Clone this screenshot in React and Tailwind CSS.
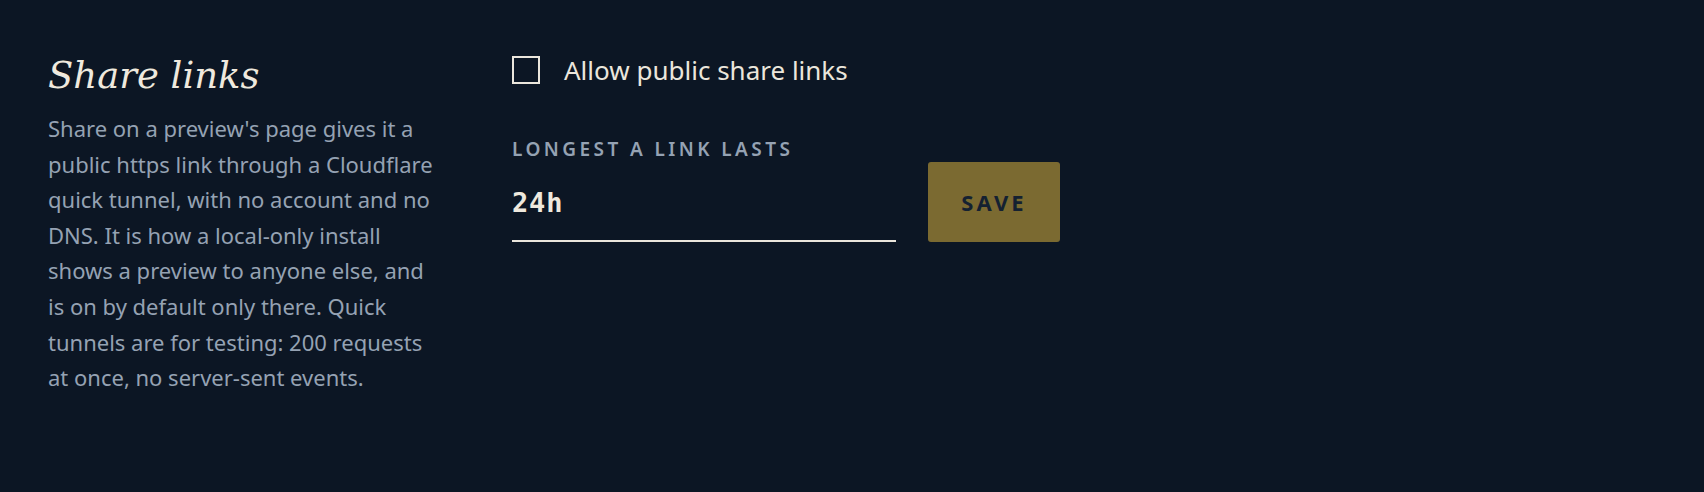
export default function App() {
  return (
    <div className="min-h-[492px] w-full bg-[#0c1624] text-[#ebe6dc]">
      <div className="flex gap-[72px] px-[48px] pt-[48px]">
        {/* Left: title + description */}
        <div className="w-[392px] shrink-0">
          <h2 className="mt-[4px] font-['DejaVu_Serif',serif] text-[37px] italic leading-[48px] text-[#efe9de]">
            Share links
          </h2>
          <p className="mt-[11px] font-['Noto_Sans',sans-serif] text-[22px] leading-[35.6px] text-[#95a2b3]">
            Share on a preview's page gives it a public https link through a Cloudflare quick tunnel, with no account and no DNS. It is how a local-only install shows a preview to anyone else, and is on by default only there. Quick tunnels are for testing: 200 requests at once, no server-sent events.
          </p>
        </div>

        {/* Right: controls */}
        <div className="flex flex-col font-['Noto_Sans',sans-serif]">
          <label className="mt-[8px] flex items-center gap-[24px]">
            <span className="h-[28px] w-[28px] border-2 border-[#ebe6dc]" />
            <span className="text-[26px] leading-[28px] text-[#ebe6dc]">Allow public share links</span>
          </label>

          <div className="mt-[54px] text-[19px] font-semibold uppercase leading-[22px] tracking-[0.18em] text-[#95a2b3]">
            Longest a link lasts
          </div>

          <div className="mt-[2px] flex items-end gap-[32px]">
            <div className="w-[384px] border-b-2 border-[#ebe6dc] pb-[22px] font-['DejaVu_Sans_Mono',monospace] text-[27px] font-bold leading-[30px] tracking-[0.03em] text-[#efe9de]">
              24h
            </div>
            <button className="h-[80px] w-[132px] rounded-[3px] bg-[#7b6a31] text-[22px] font-bold tracking-[0.14em] text-[#142131]">
              SAVE
            </button>
          </div>
        </div>
      </div>
    </div>
  );
}
